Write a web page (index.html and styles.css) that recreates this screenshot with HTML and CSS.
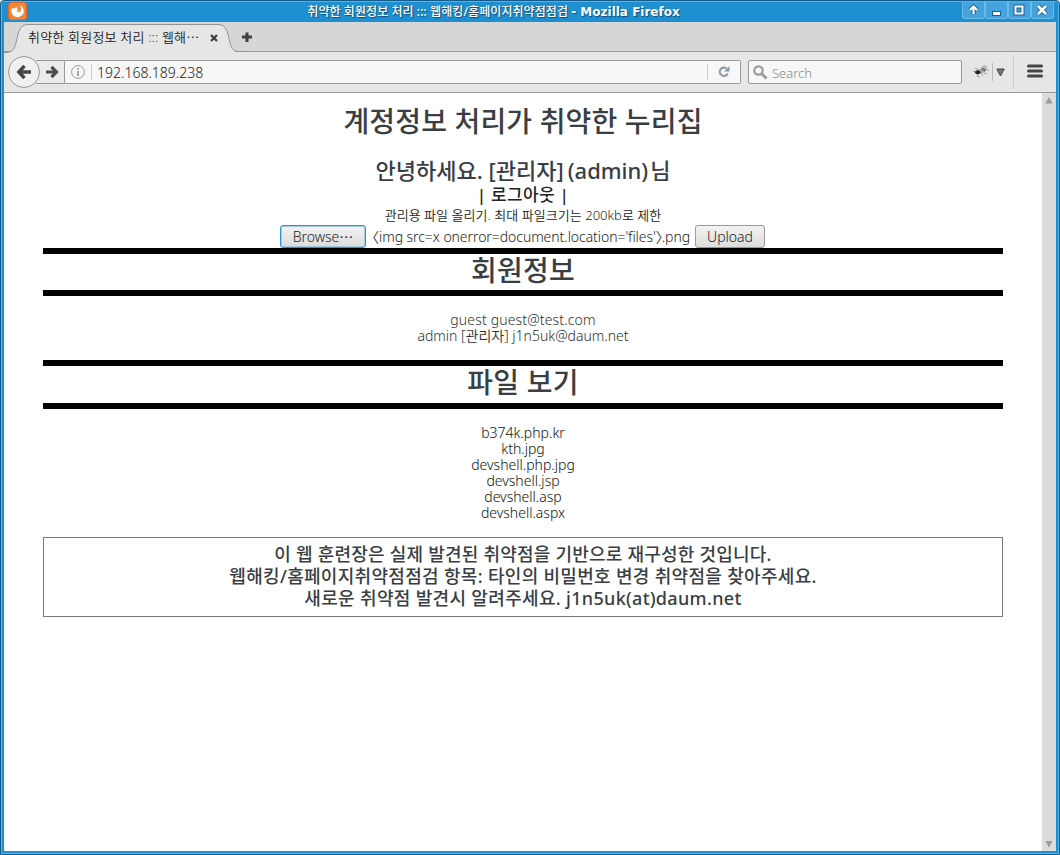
FILE: index.html
```html
<!DOCTYPE html>
<html lang="ko">

<head>
    <meta charset="UTF-8">
    <title>취약한 회원정보 처리 ::: 웹해킹/홈페이지취약점점검</title>
    <link rel="stylesheet" href="styles.css">
</head>

<body>
    <div class="window">
        <header class="titlebar">
            <svg class="app-icon" width="19" height="18" viewBox="0 0 19 18">
                <rect x="0.5" y="0.5" width="18" height="17.5" rx="3" fill="#f0853c" stroke="#d9662a"/>
                <path d="M3.300 7.500c-.3 4.500 2.500 7.500 6 7.500 3.700 0 6.500-2.600 6.500-6 0-2.400-1.400-4.500-4-5.800 1.300 1.800 1.700 3.600 1 5.400-.8 1.800-3.300 2.300-4.600.9.8.1 1.700-.4 2.100-1.300l-1.300-.8c-.1-.8.300-1.300 1-1.700C8.500 5.200 7.200 5.400 6.300 6.400 5 6 4 6.500 3.300 7.500z" fill="#fff"/>
            </svg>
            <div class="title"><span class="title-ko">취약한 회원정보 처리 ::: 웹해킹/홈페이지취약점점검</span> <span class="title-app">- Mozilla Firefox</span></div>
            <div class="controls">
                <span class="control"><svg width="23" height="17" viewBox="0 0 23 17"><path d="M11.500 13V6M8 9l3.500-3.500L15 9" fill="none" stroke="#1b5f91" stroke-width="4"/><path d="M11.500 13V6M8 9l3.500-3.500L15 9" fill="none" stroke="#fff" stroke-width="2.200"/></svg></span>
                <span class="control"><svg width="23" height="17" viewBox="0 0 23 17"><path d="M7 10h9v5H7z" fill="#1b5f91"/><path d="M8 11h7v3H8z" fill="#fff"/></svg></span>
                <span class="control"><svg width="23" height="17" viewBox="0 0 23 17"><path d="M7.500 5.500h7v7h-7z" fill="none" stroke="#1b5f91" stroke-width="4"/><path d="M7.500 5.500h7v7h-7z" fill="none" stroke="#fff" stroke-width="2"/></svg></span>
                <span class="control"><svg width="23" height="17" viewBox="0 0 23 17"><path d="M7 5l8 8M15 5l-8 8" stroke="#1b5f91" stroke-width="4.500"/><path d="M7 5l8 8M15 5l-8 8" stroke="#fff" stroke-width="2.600"/></svg></span>
            </div>
        </header>

        <div class="tabbar">
            <div class="tab">
                <svg class="tab-shape" width="240" height="30" viewBox="0 0 240 30">
                    <path d="M0 29.500h2c7 0 9-4 11-14C15 5 18 1.500 24 1.500h190c6 0 9 3.500 11 14 2 10 4 14 11 14h4v.5H0z" fill="#e6e6e6"/>
                    <path d="M0 29.500h2c7 0 9-4 11-14C15 5 18 1.500 24 1.500h190c6 0 9 3.500 11 14 2 10 4 13 11 13h4" fill="none" stroke="#8f9499"/>
                </svg>
                <span class="tab-label">취약한 회원정보 처리 ::: 웹해⋯</span>
                <svg class="tab-close" width="8" height="8" viewBox="0 0 8 8"><path d="M1 1l6 6M7 1L1 7" stroke="#404040" stroke-width="2.300"/></svg>
            </div>
            <svg class="new-tab" width="12" height="12" viewBox="0 0 12 12"><path d="M4.500 1.500h3v3H11v3H7.500v3.500h-3V7.500H1v-3h3.500z" fill="#404040"/></svg>
        </div>

        <div class="toolbar">
            <svg class="nav" width="57" height="32" viewBox="0 0 57 32">
                <path d="M28 4.500h29v23H28" fill="#ebebeb" stroke="#999"/>
                <circle cx="16" cy="16" r="15.500" fill="#f0f0f0" stroke="#999"/>
                <path d="M23 16H12M16.500 9.800L10.800 16l5.700 6.200" fill="none" stroke="#454545" stroke-width="3.400"/>
                <path d="M38 16h9M43.500 10.800l5 5.200-5 5.200" fill="none" stroke="#4c4c4c" stroke-width="3.200"/>
            </svg>
            <div class="urlbar">
                <svg class="info" width="14" height="14" viewBox="0 0 14 14"><circle cx="7" cy="7" r="6.400" fill="none" stroke="#999"/><path d="M6.200 3h1.700v1.700H6.200zM6.200 6h1.700v5H6.200z" fill="#999"/></svg>
                <span class="url">192.168.189.238</span>
                <span class="reload"><svg width="12" height="13" viewBox="0 0 12 13"><path d="M9.800 8.500A4.200 4.200 0 1 1 8.500 3.400" fill="none" stroke="#8d99a6" stroke-width="2.100"/><path d="M11.500 1v5.500H6z" fill="#8d99a6"/></svg></span>
            </div>
            <div class="search">
                <svg width="15" height="15" viewBox="0 0 15 15"><circle cx="5.500" cy="5.500" r="4.200" fill="none" stroke="#999" stroke-width="2.200"/><path d="M8.500 8.500l5 5" stroke="#999" stroke-width="2.800"/></svg>
                <span>Search</span>
            </div>
            <svg class="bug" width="16" height="14" viewBox="0 0 16 14">
                <path d="M2 3.500l4 1M8 3l3-2 3 .5M14 4l1.500 2M11 8l3 1M4 9l1 3 2-.5M8 8l2 3M3 7L0 6" fill="none" stroke="#999" stroke-width="1"/>
                <path d="M6 5l3-2 4-1 1 2.500-3 3-4 1z" fill="#aaa"/>
                <path d="M8 4l4 2M10 3l2.500 2.500" stroke="#555"/>
                <ellipse cx="4.800" cy="7.300" rx="2.700" ry="2" fill="#222"/>
            </svg>
            <span class="bug-menu"><svg width="9" height="9" viewBox="0 0 9 9"><path d="M.8 1h7.400L4.500 8z" fill="#777" stroke="#444"/></svg></span>
            <span class="menu"><svg width="16" height="14" viewBox="0 0 16 14"><path d="M1.500 2h13M1.500 7h13M1.500 12h13" stroke="#454545" stroke-width="3" stroke-linecap="round"/></svg></span>
        </div>

        <div class="viewport">
            <main class="page">
                <h1>계정정보 처리가 취약한 누리집</h1>
                <h2>안녕하세요. [관리자]<span class="user">(admin)</span>님</h2>
                <p class="logout">| 로그아웃 |</p>
                <p class="note">관리용 파일 올리기. 최대 파일크기는 200kb로 제한</p>
                <div class="upload">
                    <button class="browse">Browse⋯</button>
                    <span class="filename"><span class="angle left">〈</span>img src=x onerror=document.location='files'<span class="angle">〉</span>.png</span>
                    <button class="send">Upload</button>
                </div>

                <h3>회원정보</h3>
                <div class="members">
                    <p class="guest">guest guest@test.com</p>
                    <p class="admin">admin [관리자] j1n5uk@daum.net</p>
                </div>

                <h3 class="files-title">파일 보기</h3>
                <div class="files">
                    <p>b374k.php.kr</p>
                    <p>kth.jpg</p>
                    <p>devshell.php.jpg</p>
                    <p>devshell.jsp</p>
                    <p>devshell.asp</p>
                    <p>devshell.aspx</p>
                </div>

                <footer class="notice">
                    <p class="notice-1">이 웹 훈련장은 실제 발견된 취약점을 기반으로 재구성한 것입니다.</p>
                    <p class="notice-2">웹해킹/홈페이지취약점점검 항목: 타인의 비밀번호 변경 취약점을 찾아주세요.</p>
                    <p class="notice-3">새로운 취약점 발견시 알려주세요. j1n5uk(at)daum.net</p>
                </footer>
            </main>
            <div class="scrollbar">
                <svg width="8" height="7" viewBox="0 0 8 7"><path d="M4 0l3.500 6.500h-7z" fill="#999"/></svg>
                <svg width="8" height="7" viewBox="0 0 8 7"><path d="M4 6.500L.5 0h7z" fill="#999"/></svg>
            </div>
        </div>
    </div>
</body>

</html>
```
FILE: styles.css
```css
* {
    box-sizing: border-box;
}

body {
    margin: 0;
    background: #fff;
    font-family: "Noto Sans", "Noto Sans CJK KR", sans-serif;
    font-weight: 350;
    color: #393e44;
}

h1,
h2,
h3,
p {
    margin: 0;
    white-space: nowrap;
}

h1,
h2,
h3 {
    font-weight: 500;
}

svg {
    display: block;
    flex: none;
}

.window {
    display: flex;
    flex-direction: column;
    width: 1060px;
    height: 855px;
    padding: 1px 3px 3px;
    background: #1e8fd0;
    border: 1px solid #135b89;
    border-radius: 4px 4px 0 0;
    box-shadow: inset 0 0 0 1px #5fb1e0;
    overflow: hidden;
}

/* window title */
.titlebar {
    display: flex;
    height: 20px;
    flex: none;
    padding-left: 4px;
}

.title {
    flex: 1;
    padding-right: 2px;
    line-height: 20px;
    font-size: 12px;
    font-weight: 500;
    text-align: center;
    color: #fff;
    text-shadow: 1px 1px 1px #17486b;
    white-space: nowrap;
}

.title-ko {
    letter-spacing: 0.07px;
}

.title-app {
    font-family: "DejaVu Sans", sans-serif;
    font-weight: bold;
}

.controls {
    display: flex;
    margin-right: 2px;
}

.control {
    width: 23px;
    height: 17px;
    background: #44a2dc;
    border: 1px solid #6cbaea;
    border-top: 0;
    border-radius: 0 0 3px 3px;
}

.control svg {
    margin-left: -1px;
    margin-top: -1px;
}

/* tabs */
.tabbar {
    display: flex;
    align-items: center;
    height: 30px;
    flex: none;
    background: #d6d6d6;
    border-bottom: 1px solid #999;
}

.tab {
    position: relative;
    display: flex;
    align-items: center;
    width: 236px;
    height: 30px;
    padding-left: 24px;
}

.tab-shape {
    position: absolute;
    left: 0;
    top: 1px;
}

.tab-label {
    position: relative;
    width: 182px;
    font-size: 13px;
    line-height: 30px;
    letter-spacing: 0.2px;
    white-space: nowrap;
    color: #222;
}

.tab-close {
    position: relative;
    margin-top: 2px;
}

.new-tab {
    margin: 1px 0 0 1px;
}

/* navigation */
.toolbar {
    display: flex;
    align-items: center;
    height: 41px;
    flex: none;
    padding-left: 4px;
    background: #e6e6e6;
    border-bottom: 1px solid #999;
}

.urlbar,
.search {
    display: flex;
    align-items: center;
    height: 24px;
    background: #f7f7f7;
    border: 1px solid #999;
}

.urlbar {
    width: 677px;
    margin-left: -1px;
    padding-left: 6px;
    border-radius: 0 2px 2px 0;
}

.url {
    flex: 1;
    height: 16px;
    margin-left: 6px;
    padding-left: 5px;
    border-left: 1px solid #ccc;
    font-size: 14px;
    line-height: 17px;
    color: #222;
}

.reload {
    width: 33px;
    height: 16px;
    padding: 1px 0 0 10px;
    border-left: 1px solid #ccc;
}

.search {
    width: 214px;
    margin-left: 7px;
    padding-left: 4px;
    gap: 4px;
    border-radius: 2px;
    font-size: 13px;
    line-height: 20px;
    color: #888;
}

.search span {
    padding-top: 1px;
}

.bug {
    margin-left: 11px;
}

.bug-menu {
    height: 18px;
    margin-left: 3px;
    padding: 5px 0 0 3px;
    border-left: 1px solid #bbb;
}

.menu {
    height: 34px;
    margin-left: 8px;
    padding: 9px 0 0 13px;
    border-left: 1px solid #ccc;
}

/* web page */
.viewport {
    display: flex;
    flex: 1;
    background: #fff;
}

.page {
    flex: 1;
    padding: 10px 39px 0;
    text-align: center;
    font-size: 14px;
}

h1 {
    height: 53px;
    font-size: 28px;
    line-height: 37px;
    letter-spacing: 0.15px;
}

h2 {
    height: 29px;
    font-size: 22px;
    line-height: 29px;
}

.user {
    margin: 0 2px 0 4px;
}

.logout {
    height: 20px;
    font-size: 17px;
    line-height: 20px;
    font-weight: 500;
    letter-spacing: 0.3px;
    color: #222;
}

.note {
    height: 20px;
    font-size: 13px;
    line-height: 21px;
    letter-spacing: 0.05px;
    color: #222;
}

.upload {
    display: flex;
    justify-content: center;
    height: 23px;
    padding-right: 1px;
    line-height: 23px;
    color: #222;
}

.upload button {
    height: 23px;
    padding: 0;
    border: 1px solid #999;
    border-radius: 3px;
    background: linear-gradient(#f3f3f3, #dcdcdc);
    font-family: inherit;
    font-size: 14px;
    font-weight: inherit;
    line-height: 20px;
    color: #222;
}

.upload .browse {
    width: 86px;
    border-color: #3a8fc4;
    box-shadow: inset 0 0 0 1px #a5cbe3;
}

.upload .send {
    width: 70px;
}

.filename {
    display: flex;
    justify-content: flex-end;
    width: 329px;
    padding-right: 5px;
    white-space: pre;
    letter-spacing: -0.06px;
}

.angle {
    width: 6px;
}

/* the opening bracket sits at the right of its full-width cell */
.left {
    display: flex;
    justify-content: flex-end;
}

h3 {
    height: 48px;
    border: solid #000;
    border-width: 6px 0;
    font-size: 28px;
    line-height: 32px;
    letter-spacing: 0.2px;
}

.files-title {
    height: 49px;
}

.members {
    height: 64px;
    padding-top: 16px;
    line-height: 16px;
    color: #2b2f34;
}

.guest {
    letter-spacing: 0.15px;
}

.files {
    height: 128px;
    padding-top: 16px;
    line-height: 16px;
    color: #111;
}

.notice {
    height: 80px;
    padding-top: 5px;
    border: 1px solid #777;
    font-size: 18px;
    font-weight: 500;
    line-height: 22px;
}

.notice-1 {
    letter-spacing: 0.22px;
}

.notice-2 {
    letter-spacing: 0.31px;
}

.notice-3 {
    letter-spacing: 0.33px;
}

.scrollbar {
    display: flex;
    flex-direction: column;
    align-items: center;
    justify-content: space-between;
    width: 14px;
    padding: 4px 0 3px;
    background: #dcdcdc;
}
```
